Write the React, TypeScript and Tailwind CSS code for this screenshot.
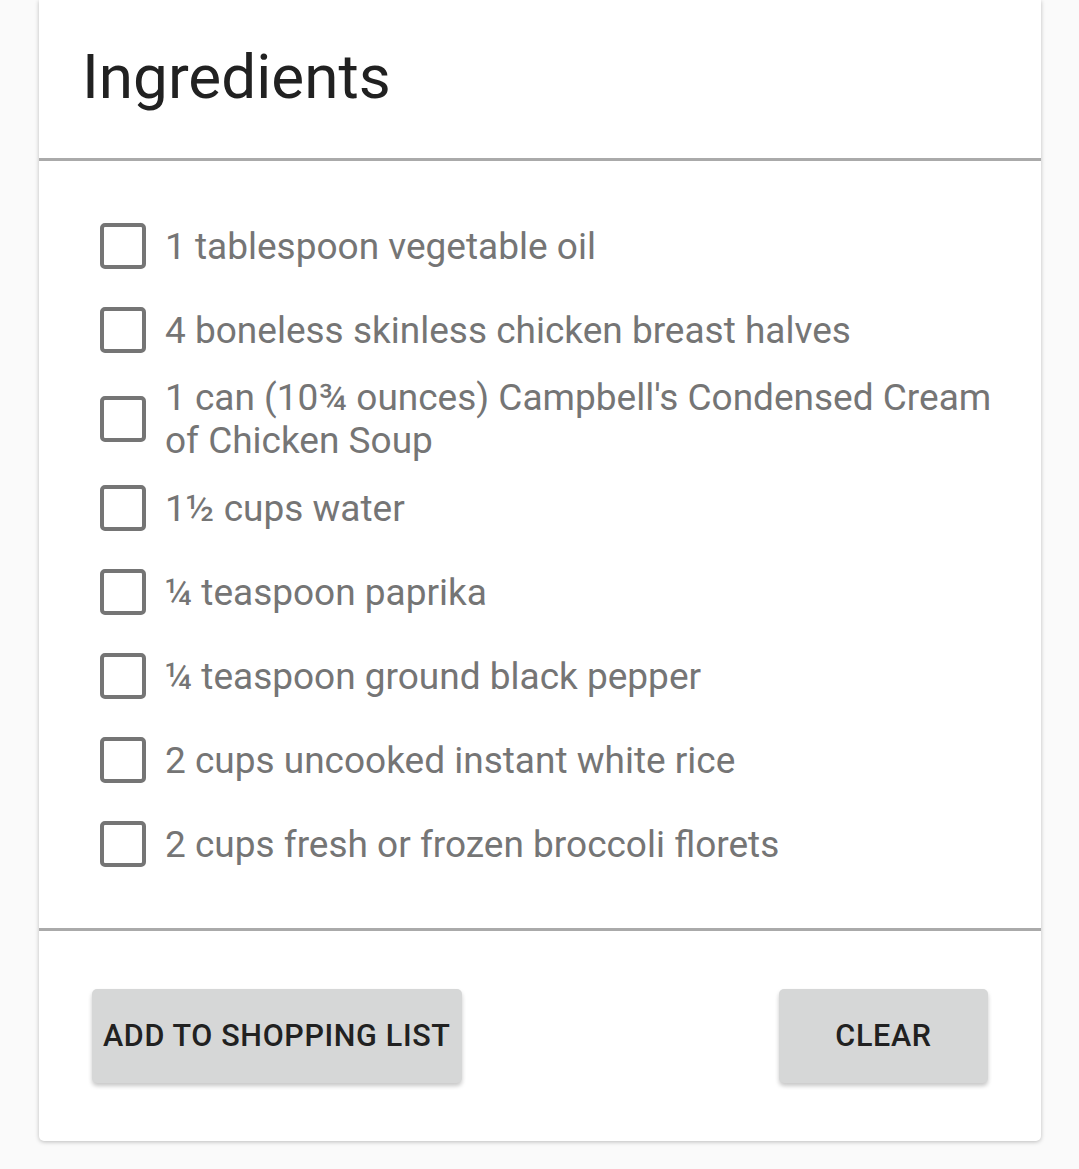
const ITEMS = [
  '1 tablespoon vegetable oil',
  '4 boneless skinless chicken breast halves',
  "1 can (10¾ ounces) Campbell's Condensed Cream of Chicken Soup",
  '1½ cups water',
  '¼ teaspoon paprika',
  '¼ teaspoon ground black pepper',
  '2 cups uncooked instant white rice',
  '2 cups fresh or frozen broccoli florets',
];

function Checkbox() {
  return <span className="block w-[46px] h-[46px] shrink-0 rounded-[5px] border-[4px] border-[#757575]" />;
}

export default function App() {
  return (
    <div className="min-h-[1169px] bg-[#fafafa] pl-[39px] pr-[38px] pb-[28px]" style={{ fontFamily: 'Roboto, "Noto Sans", sans-serif' }}>
      <div className="bg-white rounded-b-[5px] shadow-[0_1px_4px_rgba(0,0,0,0.25)]">
        <div className="h-[158px] pl-[43px] pt-[39px]">
          <h1 className="text-[62px] leading-[76px] text-[#212121]">Ingredients</h1>
        </div>
        <div className="h-[3px] bg-[#aaaaaa]" />
        <ul className="pt-[43px] pb-[42px] pl-[61px] pr-[44px]">
          {ITEMS.map((item) => (
            <li key={item} className="flex items-center gap-[19px] min-h-[84px] py-[4px]">
              <Checkbox />
              <span className="text-[37px] leading-[43px] text-[#757575]">{item}</span>
            </li>
          ))}
        </ul>
        <div className="h-[3px] bg-[#aaaaaa]" />
        <div className="flex justify-between px-[53px] pt-[58px] pb-[58px]">
          <button className="h-[94px] px-[11px] rounded-[5px] bg-[#d6d7d7] text-[#212121] text-[30.5px] tracking-[0.65px] font-medium shadow-[0_3px_4px_rgba(0,0,0,0.22)]">
            ADD TO SHOPPING LIST
          </button>
          <button className="h-[94px] w-[209px] rounded-[5px] bg-[#d6d7d7] text-[#212121] text-[30.5px] tracking-[0.65px] font-medium shadow-[0_3px_4px_rgba(0,0,0,0.22)]">
            CLEAR
          </button>
        </div>
      </div>
    </div>
  );
}
